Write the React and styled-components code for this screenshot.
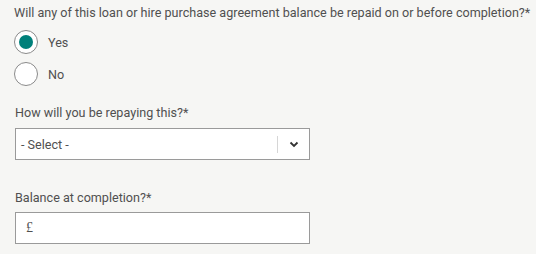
import React, { useState } from "react";
import styled, { createGlobalStyle } from "styled-components";

const GlobalStyle = createGlobalStyle`
  body {
    margin: 0;
    background: #f6f6f4;
    font-family: Roboto, "Liberation Sans", sans-serif;
    color: #505050;
  }
`;

const Form = styled.div`
  padding: 3px 6px 0 15px;
  width: 536px;
  box-sizing: border-box;
  font-size: 12.6px;
`;

const Question = styled.div`
  line-height: 20px;
  white-space: nowrap;
  margin-left: -1px;
`;

const RadioGroup = styled.div`
  display: flex;
  flex-direction: column;
  gap: 8px;
  margin-top: 7px;
`;

const RadioRow = styled.label`
  display: flex;
  align-items: center;
  gap: 10px;
  height: 24px;
  cursor: pointer;
`;

const Circle = styled.span`
  width: 22px;
  height: 22px;
  border-radius: 50%;
  border: 1px solid #8a8a8a;
  background: #fff;
  display: flex;
  align-items: center;
  justify-content: center;
  margin-left: -1px;

  &::after {
    content: "";
    width: 14px;
    height: 14px;
    border-radius: 50%;
    background: ${(p) => (p.$checked ? "#00807a" : "transparent")};
  }
`;

const FieldLabel = styled.div`
  line-height: 20px;
  margin-top: ${(p) => p.$top}px;
`;

const Box = styled.div`
  width: 295px;
  height: 32px;
  box-sizing: border-box;
  border: 1px solid #9a9a9a;
  background: #fff;
  display: flex;
  align-items: center;
  margin-top: ${(p) => p.$top}px;
`;

const SelectText = styled.span`
  flex: 1;
  padding-left: 5px;
`;

const Divider = styled.span`
  width: 1px;
  height: 17px;
  background: #d6d6d6;
`;

const Chevron = styled.span`
  width: 31px;
  display: flex;
  justify-content: center;
  color: #333;
`;

const Currency = styled.span`
  padding-left: 10px;
  font-family: "Liberation Serif", serif;
  font-size: 14px;
`;

export default function App() {
  const [answer, setAnswer] = useState("yes");
  return (
    <>
      <GlobalStyle />
      <Form>
        <Question>
          Will any of this loan or hire purchase agreement balance be repaid on or before completion?*
        </Question>
        <RadioGroup>
          <RadioRow onClick={() => setAnswer("yes")}>
            <Circle $checked={answer === "yes"} />
            Yes
          </RadioRow>
          <RadioRow onClick={() => setAnswer("no")}>
            <Circle $checked={answer === "no"} />
            No
          </RadioRow>
        </RadioGroup>
        <FieldLabel $top={17}>How will you be repaying this?*</FieldLabel>
        <Box $top={5}>
          <SelectText>- Select -</SelectText>
          <Divider />
          <Chevron>
            <svg width="10" height="7" viewBox="0 0 10 7">
              <path d="M1.5 1.5 L5 5 L8.5 1.5" fill="none" stroke="currentColor" strokeWidth="1.8" />
            </svg>
          </Chevron>
        </Box>
        <FieldLabel $top={28}>Balance at completion?*</FieldLabel>
        <Box $top={4}>
          <Currency>£</Currency>
        </Box>
      </Form>
    </>
  );
}
